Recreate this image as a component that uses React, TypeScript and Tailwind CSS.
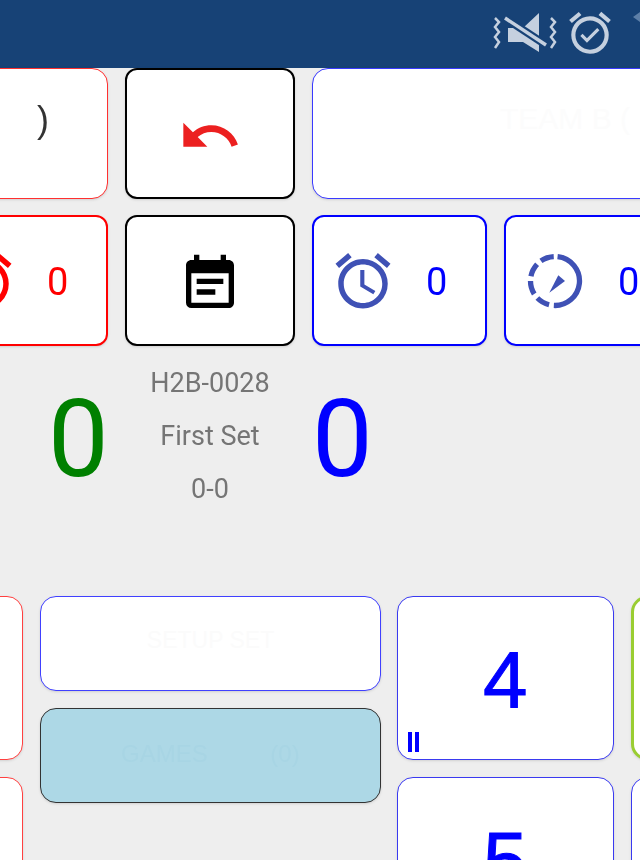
import { MdAccessAlarm, MdAlarmOn, MdEventNote, MdUndo } from "react-icons/md";

const roboto = { fontFamily: "Roboto, sans-serif" };
const arial = { fontFamily: "Liberation Sans, sans-serif" };

function VibrateOff() {
  return (
    <svg width="70" height="55" viewBox="0 0 70 55" fill="none" className="mb-[3px] shrink-0">
      <path d="M5 13l4 4-4 5 4 5-4 5 4 5-4 6" stroke="#c5d0df" strokeWidth="2.5" />
      <path d="M61 13l4 4-4 5 4 5-4 5 4 5-4 6" stroke="#c5d0df" strokeWidth="2.5" />
      <path d="M18 23h15l16-15v39l-16-10h-15z" fill="#c5d0df" />
      <path d="M15 13l41 27" stroke="#174276" strokeWidth="8" />
      <path d="M15 13l41 27" stroke="#c5d0df" strokeWidth="3.5" />
    </svg>
  );
}

function DashCompass() {
  return (
    <svg width="66" height="66" viewBox="0 0 66 66" fill="none" className="shrink-0">
      <circle cx="33" cy="33" r="24.5" stroke="#3f51b5" strokeWidth="5.3" strokeDasharray="75 5 13.5 5 13.5 5 13.5 5 13.5 5" transform="rotate(-84 33 33)" />
      <path d="M43 33l-6.7-5.7-9 17.4z" fill="#3f51b5" />
    </svg>
  );
}

function Count({ color, icon }: { color: string; icon: React.ReactNode }) {
  return (
    <div className={`flex h-[131px] items-center justify-end gap-[30px] rounded-xl border-2 bg-white pr-[38px] shadow-sm ${color}`}>
      {icon}
      <span className="mt-[2px] text-[38px] leading-none will-change-transform">0</span>
    </div>
  );
}

function NumberKey({ label, mark, border = "border-[#3a3af0]" }: { label?: string; mark?: boolean; border?: string }) {
  return (
    <div className={`relative flex h-[164px] w-[217px] shrink-0 items-center justify-center rounded-2xl border bg-white pt-[3px] shadow-sm ${border}`}>
      {label && <span className="text-[80px] leading-none text-[#0000ff] will-change-transform [-webkit-text-stroke:1px_#0000ff]" style={arial}>{label}</span>}
      {mark && (
        <span className="absolute bottom-[7px] left-[10px] flex gap-[3px]">
          <i className="h-5 w-[4px] bg-[#0000ff]" />
          <i className="h-5 w-[4px] bg-[#0000ff]" />
        </span>
      )}
    </div>
  );
}

export default function App() {
  return (
    <div className="h-[860px] w-[640px] overflow-hidden bg-[#eeeeee]" style={roboto}>
      <header className="flex h-[68px] items-center justify-end bg-[#174276]">
        <VibrateOff />
        <MdAlarmOn size={50} color="#c5d0df" className="mb-[2px] ml-[5px]" />
        {/* status arrow cut by the right edge */}
        <div className="mb-[34px] ml-[18px] h-0 w-0 border-y-[5px] border-r-[7px] border-y-transparent border-r-[#5d7fa8]" />
      </header>

      {/* top two rows run off both sides of the window */}
      <section className="ml-[-70px] flex w-[1000px] flex-col gap-[16px]">
        <div className="flex gap-[17px]">
          <div className="flex h-[131px] w-[178px] items-center justify-end rounded-2xl border border-[#ff3030] bg-white pb-[28px] pr-[58px] text-[36px] text-[#333333] shadow-sm" style={arial}>
            <span className="will-change-transform">)</span>
          </div>
          <div className="flex h-[131px] w-[170px] items-center justify-center rounded-xl border-2 border-black bg-white shadow-sm">
            <MdUndo size={64} color="#ec2020" className="mt-[4px]" />
          </div>
          <div className="flex h-[131px] w-[520px] items-center rounded-2xl border border-[#3a3aff] bg-white pb-[30px] pl-[187px] text-[30px] text-[#fcfcfc] shadow-sm" style={arial}>TEAM B (</div>
        </div>
        <div className="flex gap-[17px]">
          <div className="w-[178px]">
            <Count color="border-[#ff0000] text-[#ff0000]" icon={<MdAccessAlarm size={66} color="#ff0000" />} />
          </div>
          <div className="flex h-[131px] w-[170px] items-center justify-center rounded-xl border-2 border-black bg-white shadow-sm">
            <MdEventNote size={64} color="#000000" className="mt-[6px]" />
          </div>
          <div className="w-[175px]">
            <Count color="border-[#0000ff] text-[#0000ff]" icon={<MdAccessAlarm size={66} color="#3f51b5" className="mt-[1px]" />} />
          </div>
          <div className="w-[175px]">
            <Count color="border-[#0000ff] text-[#0000ff]" icon={<DashCompass />} />
          </div>
        </div>
      </section>

      <section className="flex h-[250px] items-start will-change-transform">
        <span className="ml-[48px] mt-[28px] w-[57px] text-center text-[108px] leading-[130px] text-[#008000]">0</span>
        <div className="ml-[20px] flex w-[170px] flex-col items-center pt-[11px] text-[27px] leading-[53px] text-[#757575]">
          <span>H2B-0028</span>
          <span>First Set</span>
          <span>0-0</span>
        </div>
        <span className="ml-[17px] mt-[28px] w-[57px] text-center text-[108px] leading-[130px] text-[#0000ff]">0</span>
      </section>

      <section className="ml-[-194px] flex w-[1100px] gap-[16px]">
        <div className="mr-[1px] flex flex-col gap-[17px]">
          <NumberKey border="border-[#ff4040]" />
          <NumberKey border="border-[#ff4040]" />
        </div>
        <div className="flex w-[341px] flex-col gap-[17px]" style={arial}>
          <div className="flex h-[95px] items-center justify-center rounded-2xl border border-[#4040ff] bg-white pb-[6px] text-[23px] text-[#fbfbfb] shadow-sm">SETUP SET</div>
          <div className="flex h-[95px] items-center justify-center rounded-2xl border border-[#333333] bg-[#add8e6] pb-[4px] text-[24px] text-[#a8d5e4] shadow-sm [word-spacing:56px]">
            <span className="will-change-transform">GAMES (0)</span>
          </div>
        </div>
        <div className="mr-[1px] flex flex-col gap-[17px]">
          <NumberKey label="4" mark />
          <NumberKey label="5" />
        </div>
        <div className="flex flex-col gap-[17px]">
          <div className="h-[164px] w-[217px] rounded-2xl border-[3px] border-[#9acd32] bg-white shadow-sm" />
          <NumberKey />
        </div>
      </section>
    </div>
  );
}
